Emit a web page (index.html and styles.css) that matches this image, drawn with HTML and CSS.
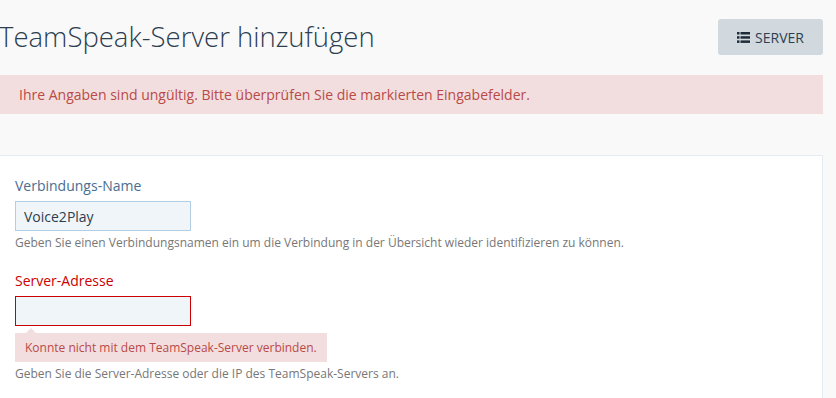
FILE: index.html
```html
<!DOCTYPE html>
<html lang="de">
<head>
  <meta charset="UTF-8" />
  <title>TeamSpeak-Server hinzufügen</title>
  <link rel="stylesheet" href="styles.css">
</head>
<body>
  <div class="page">
    <header class="page-header">
      <h1>TeamSpeak-Server hinzufügen</h1>
      <button class="btn-server">
        <svg class="icon-list" width="13" height="11" viewBox="0 0 13 11">
          <rect x="0" y="0" width="2.5" height="2.5" />
          <rect x="3.5" y="0" width="9.5" height="2.5" />
          <rect x="0" y="4.2" width="2.5" height="2.5" />
          <rect x="3.5" y="4.2" width="9.5" height="2.5" />
          <rect x="0" y="8.4" width="2.5" height="2.5" />
          <rect x="3.5" y="8.4" width="9.5" height="2.5" />
        </svg>
        SERVER
      </button>
    </header>

    <div class="alert">Ihre Angaben sind ungültig. Bitte überprüfen Sie die markierten Eingabefelder.</div>

    <form class="card">
      <div class="field">
        <label class="field-label" for="name">Verbindungs-Name</label>
        <input id="name" class="field-input" type="text" value="Voice2Play" />
        <p class="field-help">Geben Sie einen Verbindungsnamen ein um die Verbindung in der Übersicht wieder identifizieren zu können.</p>
      </div>
      <div class="field has-error">
        <label class="field-label" for="address">Server-Adresse</label>
        <input id="address" class="field-input" type="text" value="" />
        <div class="field-error">Konnte nicht mit dem TeamSpeak-Server verbinden.</div>
        <p class="field-help">Geben Sie die Server-Adresse oder die IP des TeamSpeak-Servers an.</p>
      </div>
    </form>
  </div>
</body>
</html>
```

FILE: styles.css
```css
* {
  margin: 0;
  padding: 0;
  box-sizing: border-box;
}
html, body {
  width: 100%;
  height: 100%;
  overflow: hidden;
}
body {
  font-family: 'Open Sans', 'Liberation Sans', sans-serif;
  background: #f9f9f9;
  color: #333;
}
.page {
  width: 823px;
}
.page-header {
  display: flex;
  justify-content: space-between;
  align-items: center;
  padding-top: 19px;
  height: 55px;
}
.page-header h1 {
  font-size: 27.5px;
  font-weight: 300;
  color: #2c3e50;
  margin-left: -1px;
  line-height: 36px;
}
.btn-server {
  display: flex;
  align-items: center;
  gap: 5px;
  height: 36px;
  width: 105px;
  justify-content: center;
  font-family: inherit;
  font-size: 14px;
  color: #2c3e50;
  background: #d1d9de;
  border: none;
  border-radius: 3px;
}
.icon-list {
  fill: #1e2b38;
}
.alert {
  margin-top: 20px;
  height: 39px;
  padding: 0 19px;
  display: flex;
  align-items: center;
  background: #f2dede;
  color: #b94a48;
  font-size: 14px;
}
.card {
  margin-top: 41px;
  background: #fff;
  border: 1px solid #e6ebf3;
  border-left: none;
  padding: 20px 15px 20px;
}
.field + .field {
  margin-top: 20px;
}
.field-label {
  display: block;
  font-size: 14px;
  line-height: 20px;
  color: #4a6d92;
  margin-bottom: 5px;
}
.field-input {
  display: block;
  width: 176px;
  height: 30px;
  padding: 0 8px;
  font-family: inherit;
  font-size: 14px;
  color: #2c3e50;
  background: #f0f5f9;
  border: 1px solid #b3cde3;
  outline: none;
}
.field-help {
  margin-top: 3px;
  font-size: 12px;
  line-height: 17px;
  color: #777;
}
.has-error .field-label {
  color: #cc0000;
}
.has-error .field-input {
  border-color: #cc0000;
}
.field-error {
  position: relative;
  display: inline-block;
  margin-top: 7px;
  padding: 6px 10px;
  font-size: 12px;
  line-height: 17px;
  background: #f2dede;
  color: #b94a48;
}
.field-error::before {
  content: "";
  position: absolute;
  top: -5px;
  left: 11px;
  border-left: 5px solid transparent;
  border-right: 5px solid transparent;
  border-bottom: 5px solid #f2dede;
}
```
